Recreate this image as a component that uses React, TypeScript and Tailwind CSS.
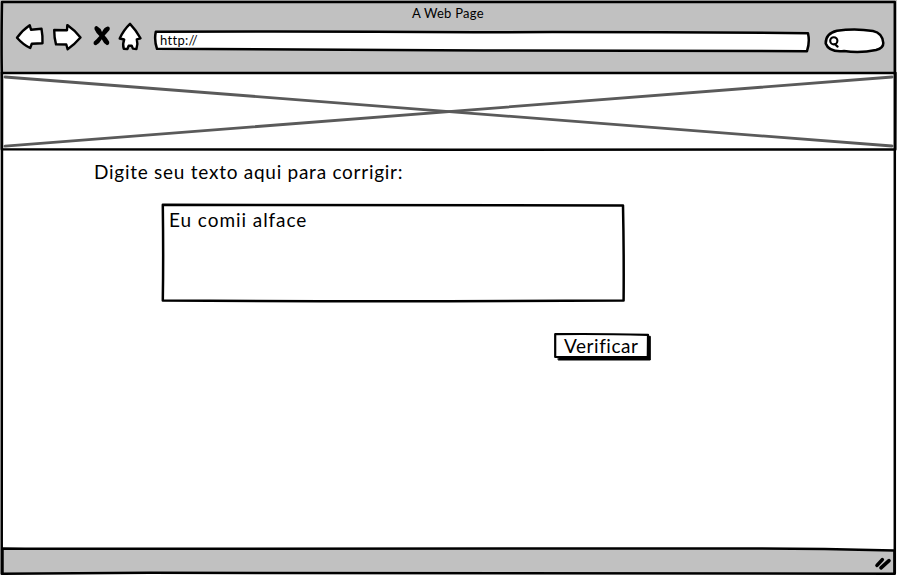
import type { ReactNode } from "react";

type SketchProps = { w: number; h: number; children: ReactNode };

/* Hand-drawn outline that sits behind the content of its parent. */
function Sketch({ w, h, children }: SketchProps) {
  return (
    <svg
      className="pointer-events-none absolute top-0 left-0 overflow-visible"
      width={w}
      height={h}
      viewBox={`0 0 ${w} ${h}`}
      fill="none"
      stroke="#000"
      strokeWidth="2.5"
      strokeLinejoin="round"
      strokeLinecap="round"
      aria-hidden="true"
    >
      {children}
    </svg>
  );
}

function NavIcons() {
  return (
    <svg
      width="128"
      height="30"
      viewBox="15 22 128 30"
      fill="#fff"
      stroke="#000"
      strokeWidth="2.4"
      strokeLinejoin="round"
      strokeLinecap="round"
      aria-hidden="true"
    >
      <path d="M17 37.7 Q22 30.5 29.7 25.2 L31 29.7 L41.5 28.8 Q42.8 36 42.5 43.3 L31.8 43.8 L30.2 48 Q23 44.5 17 37.7Z" />
      <path d="M54.2 30 L67 30.3 L67.3 25.1 Q75 30.5 80.5 37.5 Q74.5 44.5 67.6 49.2 L66.3 44.5 L56 44.3 Q54.2 38 54.2 30Z" />
      <g stroke="none" fill="#000">
        <path d="M94.6 29.5 Q93.8 26.2 96.8 26.1 Q100.6 28.2 102 32 Q104 27.6 107.6 26.6 Q110.6 26.8 109.5 30 Q107 33 104.6 35.6 Q107.4 38.4 109.2 41.8 Q109.6 45 107 45.2 Q103.4 43.2 101.8 39.2 Q99.4 43.6 96 45.2 Q92.8 45.2 93.8 41.8 Q97 39 99.4 36 Q96.1 33 94.6 29.5Z" />
      </g>
      <path d="M130 23.8 Q136 30 140.5 38.3 L136.8 39.3 Q138.2 44 136.4 49 L132.9 48.6 L131.7 45.6 L128.7 45.8 L127.4 49 L123.8 48.8 Q122.3 44 124.2 39.5 L119.7 38.5 Q123.5 30 130 23.8Z" />
    </svg>
  );
}

function Header() {
  return (
    <header className="relative flex h-[73px] flex-col bg-[#c1c1c1]">
      <h1 className="mt-[6px] ml-[412px] h-[16px] text-[13px] leading-[15px] tracking-[0.25px] whitespace-nowrap">
        A Web Page
      </h1>
      <div className="ml-[15px] flex h-[30px]">
        <NavIcons />
        <div className="relative ml-[11px] h-[30px] w-[656px]">
          <Sketch w={656} h={30}>
            <path
              fill="#fff"
              d="M1.8 9.8 Q160 9.2 320 10.2 Q500 9.8 654 11.2 Q656 20 653 29.2 Q480 29.2 330 28.5 Q170 27.4 3 26.8 Q0 18 1.8 9.8Z"
            />
          </Sketch>
          <span className="relative block pt-[11px] pl-[6px] text-[13px] leading-[15px] tracking-[0.3px]">
            http://
          </span>
        </div>
        <div className="relative ml-[14px] h-[30px] w-[61px]">
          <Sketch w={61} h={30}>
            <path
              fill="#fff"
              d="M13 8.8 Q31 6 49 9 Q58.5 11 59.3 21 Q59.5 26 52 28 Q36 31.5 20 29 Q5 30.5 1.7 21.5 Q1.5 11.5 13 8.8Z"
            />
            <circle cx="9.8" cy="18.8" r="3.6" strokeWidth="2.1" />
            <path d="M11 22.2 L13.6 24.6" strokeWidth="2.2" />
          </Sketch>
        </div>
      </div>
    </header>
  );
}

function Banner() {
  return (
    <section className="relative h-[77px] bg-white">
      <Sketch w={897} h={77}>
        <path d="M1.8 0 L895.5 0 L895.3 76.5 L450 76.8 L1.8 76.3Z" />
        <g stroke="#5a5a5a" strokeWidth="2.8">
          <path d="M5 4 L892 73" />
          <path d="M5 73.2 L892 4" />
        </g>
      </Sketch>
    </section>
  );
}

function Content() {
  return (
    <main className="flex h-[398px] flex-col bg-white">
      <p className="mt-[10px] ml-[94px] h-[24px] text-[19px] leading-[24px] tracking-[0.74px] whitespace-nowrap">
        Digite seu texto aqui para corrigir:
      </p>
      <div className="relative mt-[19px] ml-[161px] h-[100px] w-[464px]">
        <Sketch w={464} h={100}>
          <path
            fill="#fff"
            d="M1.8 1.8 Q190 2.2 462 2.4 Q463 50 462.6 97.6 Q220 99 1.8 97.6 Q2.5 55 1.8 1.8Z"
          />
        </Sketch>
        <p className="relative pt-[5px] pl-[8px] text-[19px] leading-[24px] tracking-[0.94px] whitespace-nowrap">
          Eu comii alface
        </p>
      </div>
      <button className="relative mt-[29px] ml-[553px] block h-[28px] w-[98px] text-left">
        <Sketch w={98} h={28}>
          <path
            d="M5.5 28 L97.3 28 L97.3 4.3 L94.8 4.3 L94.8 25 L5.5 25Z"
            fill="#000"
            strokeWidth="1"
          />
          <path
            fill="#fff"
            d="M2.2 2.2 Q40 1.6 95 2.8 L94.8 25 Q50 25.4 2.2 25Z"
            strokeWidth="2.2"
          />
        </Sketch>
        <span className="relative block pl-[11px] text-[19px] leading-[26px] tracking-[0.55px]">
          Verificar
        </span>
      </button>
    </main>
  );
}

function Footer() {
  return (
    <footer className="relative h-[28px]">
      <Sketch w={897} h={28}>
        <path
          fill="#c1c1c1"
          d="M2.5 .4 Q60 1 150 .8 L760 .5 Q820 .5 894.5 2.6 L894.5 25.7 Q450 24.4 150 24.8 L2.5 25.7Z"
        />
        <g strokeWidth="3.6">
          <path d="M877 17.4 L882.3 11.6" />
          <path d="M881 19.8 L889 12.6" />
        </g>
      </Sketch>
    </footer>
  );
}

export default function App() {
  return (
    <div className="relative flex h-[576px] w-[897px] flex-col overflow-hidden bg-white font-[Lato,'Open_Sans',sans-serif] font-normal text-black">
      <Header />
      <Banner />
      <Content />
      <Footer />
      <Sketch w={897} h={576}>
        <path d="M2 2 Q450 1.6 894.8 2 L894.8 573.4 M2 2 Q1.2 50 2 80 L1.7 573.8" />
      </Sketch>
    </div>
  );
}
